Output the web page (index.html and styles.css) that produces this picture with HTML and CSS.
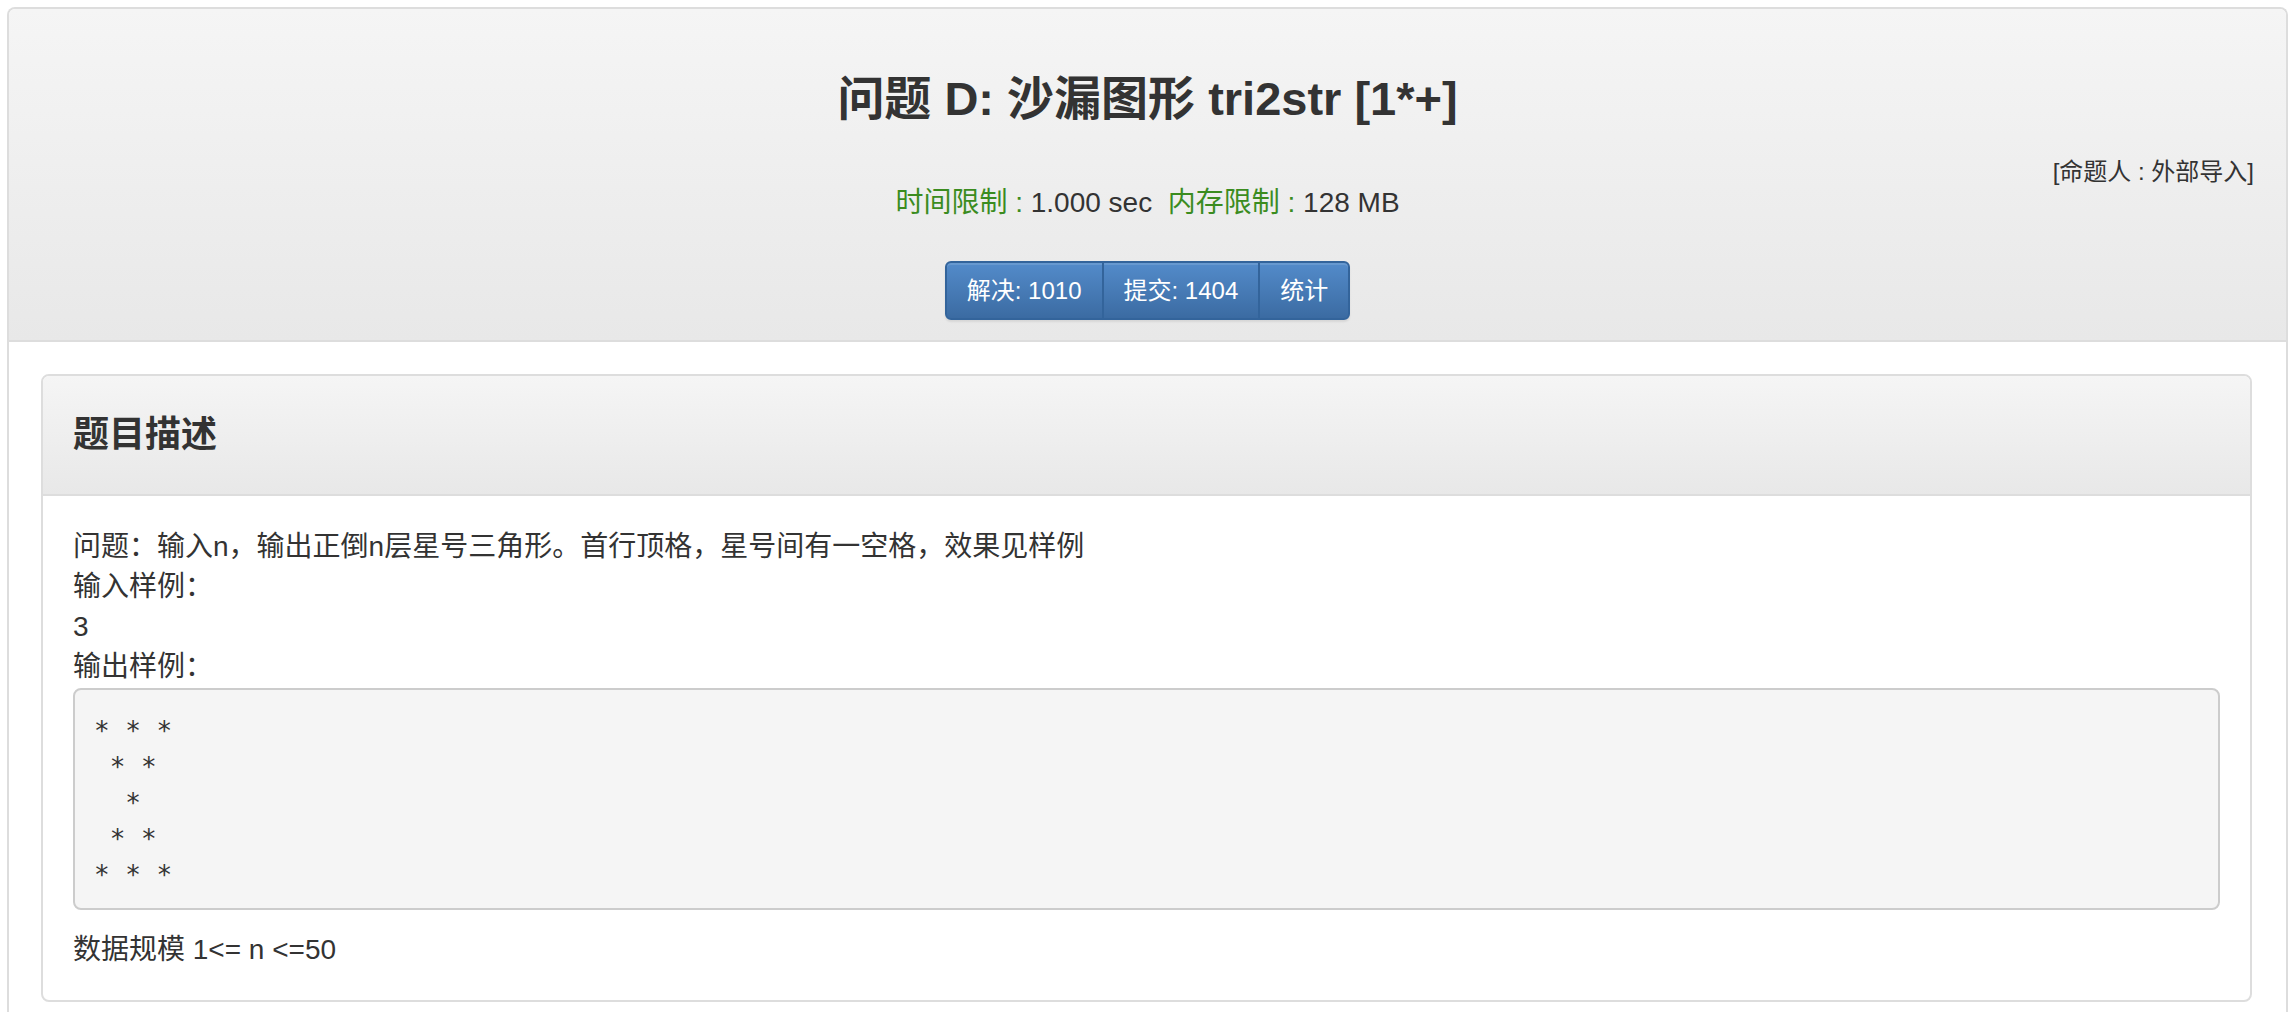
FILE: index.html
```html
<!DOCTYPE html>
<html lang="zh-CN">
<head>
<meta charset="utf-8">
<title>问题 D: 沙漏图形 tri2str [1*+]</title>
<link rel="stylesheet" href="styles.css">
</head>
<body>
<div class="page">
  <div class="panel outer">
    <div class="outer-head">
      <h2 class="title">问题 D: 沙漏图形 tri2str [1*+]</h2>
      <div class="author">[命题人 : 外部导入]</div>
      <div class="limits"><span class="green">时间限制 : </span>1.000 sec&nbsp;&nbsp;<span class="green">内存限制 : </span>128 MB</div>
      <div class="btn-group">
        <a class="btn">解决: 1010</a><a class="btn">提交: 1404</a><a class="btn">统计</a>
      </div>
    </div>
    <div class="outer-body">
      <div class="panel inner">
        <div class="inner-head"><h3 class="inner-title">题目描述</h3></div>
        <div class="inner-body">
          <div class="content">问题：输入n，输出正倒n层星号三角形。首行顶格，星号间有一空格，效果见样例<br>输入样例：<br>3<br>输出样例：</div>
<pre class="sample">* * *
 * *
  *
 * *
* * *</pre>
          <div class="content">数据规模 1&lt;= n &lt;=50</div>
        </div>
      </div>
    </div>
  </div>
</div>
</body>
</html>
```
FILE: styles.css
```css
html, body {
  margin: 0;
  padding: 0;
  background: #fff;
}
body {
  font-family: "Liberation Sans", "Noto Sans CJK SC", sans-serif;
  font-size: 28px;
  line-height: 40px;
  color: #333;
}
.page {
  padding: 7px 8px 0 7px;
}
.panel {
  border: 2px solid #ddd;
  border-radius: 8px;
  background: #fff;
}
.outer {
  border-bottom: none;
  border-radius: 8px 8px 0 0;
}
.outer-head {
  background: linear-gradient(to bottom, #f5f5f5 0%, #e8e8e8 100%);
  border-bottom: 2px solid #ddd;
  border-radius: 6px 6px 0 0;
  padding: 60px 32px 20px 32px;
  text-align: center;
}
.title {
  margin: 0;
  font-size: 47px;
  line-height: 60px;
  font-weight: bold;
  color: #333;
}
.author {
  margin-top: 31px;
  text-align: right;
  font-size: 24px;
  line-height: 23px;
  color: #333;
}
.limits {
  font-size: 28px;
  line-height: 40px;
  color: #333;
}
.green {
  color: #3b8c1f;
}
.btn-group {
  margin-top: 38px;
  display: inline-flex;
  border-radius: 6px;
  box-shadow: 0 2px 2px rgba(0,0,0,0.08);
}
.btn {
  display: block;
  font-size: 24px;
  line-height: 35px;
  padding: 10px 20px;
  color: #fff;
  background: linear-gradient(to bottom, #538bca 0%, #3b6ba2 100%);
  border: 2px solid #33649b;
  box-shadow: inset 0 2px 0 rgba(255,255,255,0.12);
  margin-left: -2px;
}
.btn:first-child {
  margin-left: 0;
  border-radius: 6px 0 0 6px;
}
.btn:last-child {
  border-radius: 0 6px 6px 0;
}
.outer-body {
  padding: 32px 34px 30px 32px;
}
.inner-head {
  background: linear-gradient(to bottom, #f5f5f5 0%, #e8e8e8 100%);
  border-bottom: 2px solid #ddd;
  border-radius: 6px 6px 0 0;
  height: 118px;
  padding: 0 30px;
  display: flex;
  align-items: center;
}
.inner-title {
  margin: 0;
  font-size: 36px;
  line-height: 40px;
  font-weight: bold;
  color: #333;
}
.inner-body {
  padding: 31px 30px 30px 30px;
}
.content {
  font-size: 28px;
  line-height: 40px;
}
.sample {
  margin: 1px 0 20px 0;
  padding: 23px 19px 15px 19px;
  font-family: "DejaVu Sans Mono", "Liberation Mono", monospace;
  font-size: 26px;
  line-height: 36px;
  color: #333;
  background: #f5f5f5;
  border: 2px solid #ccc;
  border-radius: 8px;
}
```
